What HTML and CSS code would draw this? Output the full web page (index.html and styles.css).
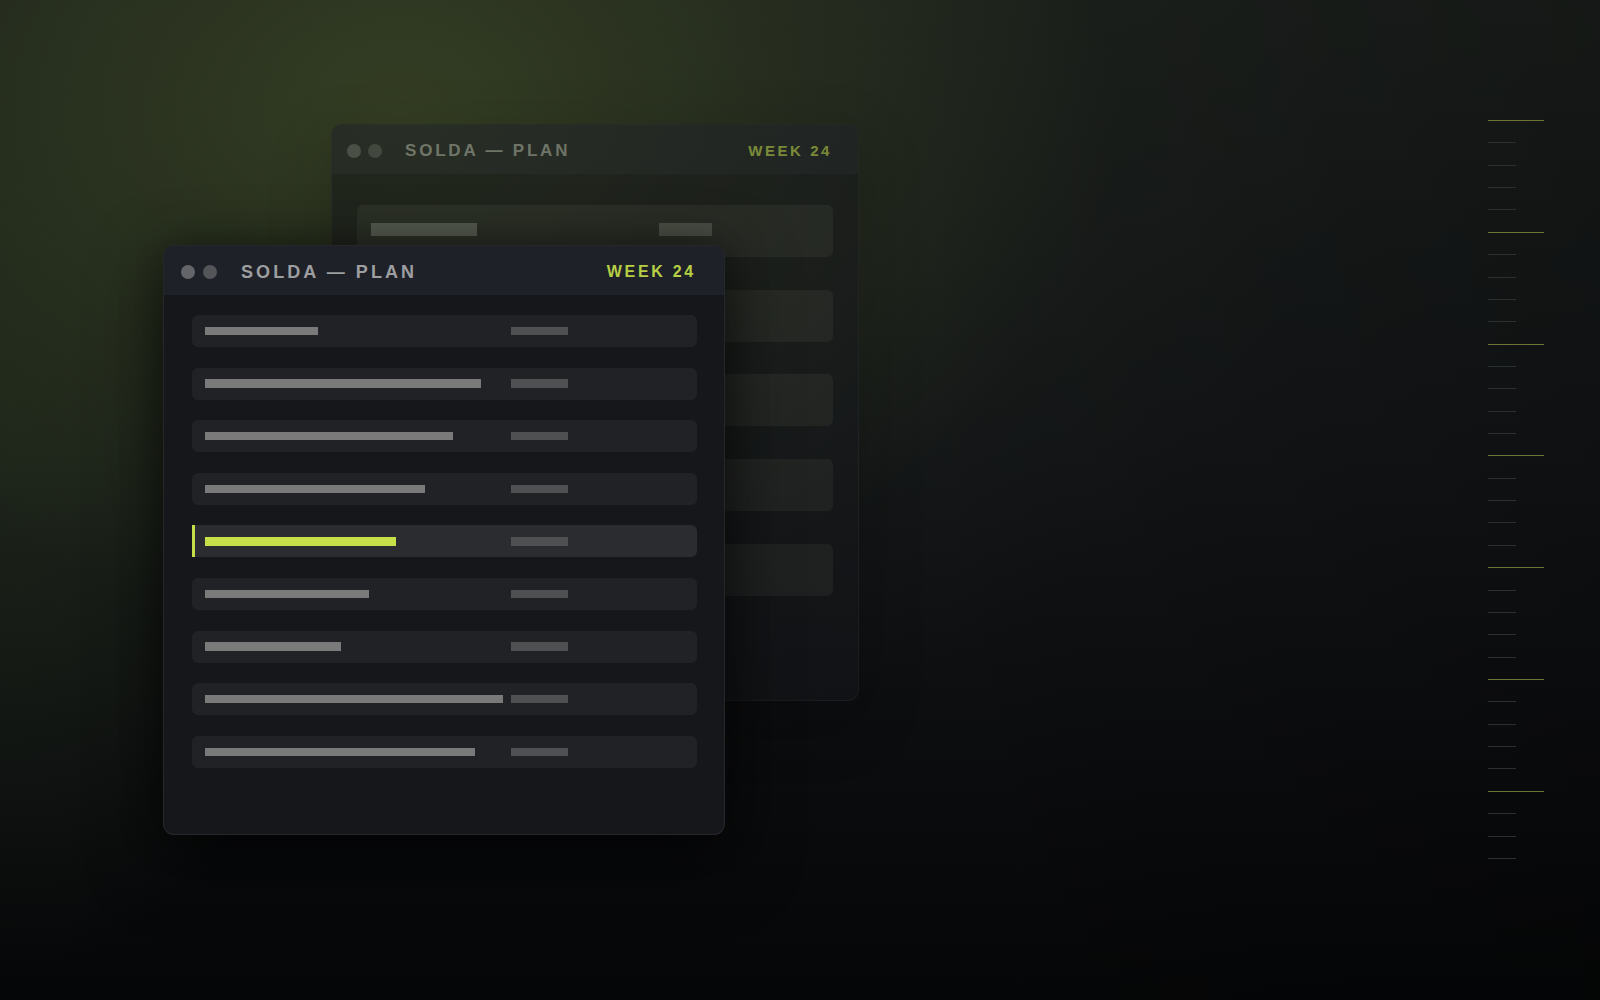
FILE: index.html
```html
<!DOCTYPE html>
<html lang="en">
<head>
<meta charset="utf-8">
<title>Solda — Plan</title>
<link rel="stylesheet" href="styles.css">
</head>
<body>
<div class="stage">
  <section class="window window--back">
    <header class="titlebar">
      <span class="dots"><i class="dot dot--a"></i><i class="dot dot--b"></i></span>
      <span class="title">SOLDA — PLAN</span>
      <span class="week">WEEK 24</span>
    </header>
    <div class="rows">
      <div class="row"><span class="cell"><b class="bar" style="width:106px"></b></span><b class="bar bar--meta"></b></div>
      <div class="row"><span class="cell"><b class="bar" style="width:240px"></b></span><b class="bar bar--meta"></b></div>
      <div class="row"><span class="cell"><b class="bar" style="width:200px"></b></span><b class="bar bar--meta"></b></div>
      <div class="row"><span class="cell"><b class="bar" style="width:180px"></b></span><b class="bar bar--meta"></b></div>
      <div class="row"><span class="cell"><b class="bar" style="width:150px"></b></span><b class="bar bar--meta"></b></div>
    </div>
  </section>

  <section class="window window--front">
    <header class="titlebar">
      <span class="dots"><i class="dot dot--a"></i><i class="dot dot--b"></i></span>
      <span class="title">SOLDA — PLAN</span>
      <span class="week">WEEK 24</span>
    </header>
    <div class="rows">
      <div class="row"><span class="cell"><b class="bar" style="width:113px"></b></span><b class="bar bar--meta"></b></div>
      <div class="row"><span class="cell"><b class="bar" style="width:276px"></b></span><b class="bar bar--meta"></b></div>
      <div class="row"><span class="cell"><b class="bar" style="width:248px"></b></span><b class="bar bar--meta"></b></div>
      <div class="row"><span class="cell"><b class="bar" style="width:220px"></b></span><b class="bar bar--meta"></b></div>
      <div class="row row--active"><span class="cell"><b class="bar bar--lime" style="width:191px"></b></span><b class="bar bar--meta"></b></div>
      <div class="row"><span class="cell"><b class="bar" style="width:164px"></b></span><b class="bar bar--meta"></b></div>
      <div class="row"><span class="cell"><b class="bar" style="width:136px"></b></span><b class="bar bar--meta"></b></div>
      <div class="row"><span class="cell"><b class="bar" style="width:298px"></b></span><b class="bar bar--meta"></b></div>
      <div class="row"><span class="cell"><b class="bar" style="width:270px"></b></span><b class="bar bar--meta"></b></div>
    </div>
  </section>

  <div class="ruler">
    <i class="tick tick--long"></i><i class="tick"></i><i class="tick"></i><i class="tick"></i><i class="tick"></i>
    <i class="tick tick--long"></i><i class="tick"></i><i class="tick"></i><i class="tick"></i><i class="tick"></i>
    <i class="tick tick--long"></i><i class="tick"></i><i class="tick"></i><i class="tick"></i><i class="tick"></i>
    <i class="tick tick--long"></i><i class="tick"></i><i class="tick"></i><i class="tick"></i><i class="tick"></i>
    <i class="tick tick--long"></i><i class="tick"></i><i class="tick"></i><i class="tick"></i><i class="tick"></i>
    <i class="tick tick--long"></i><i class="tick"></i><i class="tick"></i><i class="tick"></i><i class="tick"></i>
    <i class="tick tick--long"></i><i class="tick"></i><i class="tick"></i><i class="tick"></i>
  </div>
</div>
</body>
</html>
```

FILE: styles.css
```css
* { box-sizing: border-box; }

html, body {
  margin: 0;
  padding: 0;
  background: #0a0b0d;
}

.stage {
  position: relative;
  width: 1600px;
  height: 1000px;
  overflow: hidden;
  font-family: "Liberation Sans", Arial, sans-serif;
  background:
    radial-gradient(ellipse 1100px 800px at 400px 110px, rgba(62, 74, 38, 0.72) 0%, rgba(50, 60, 34, 0.5) 35%, rgba(30, 36, 26, 0.16) 65%, rgba(20, 24, 20, 0) 85%),
    radial-gradient(ellipse 420px 650px at 0px 420px, rgba(36, 48, 28, 0.55) 0%, rgba(30, 38, 26, 0) 85%),
    linear-gradient(90deg, rgba(0, 0, 0, 0) 0%, rgba(0, 0, 0, 0) 55%, rgba(0, 0, 0, 0.22) 100%),
    linear-gradient(180deg, #1b1f1c 0%, #131517 45%, #090a0c 85%, #050607 100%);
}

/* ---------- windows ---------- */
.window {
  position: absolute;
  border-radius: 11px;
  border: 1px solid rgba(255, 255, 255, 0.07);
  background: #16171b;
  overflow: hidden;
}

.window--front {
  left: 163px;
  top: 245px;
  width: 562px;
  height: 590px;
  box-shadow: 0 24px 70px rgba(0, 0, 0, 0.55), 0 0 40px rgba(0, 0, 0, 0.35);
}

.window--back {
  left: 331px;
  top: 124px;
  width: 528px;
  height: 577px;
  opacity: 0.52;
  box-shadow: 0 20px 60px rgba(0, 0, 0, 0.3);
}

.titlebar {
  display: flex;
  align-items: center;
  height: 49px;
  padding: 3px 27px 0 17px;
  background: #1f2129;
}

.window--back .titlebar {
  height: 49px;
  padding: 2px 27px 0 15px;
}

.dots {
  display: flex;
  gap: 8px;
}

.window--back .dots { gap: 7px; }

.dot {
  display: block;
  width: 14px;
  height: 14px;
  border-radius: 50%;
}

.dot--a { background: #636569; }
.dot--b { background: #535559; }

.title {
  margin-left: 24px;
  font-size: 18px;
  font-weight: 700;
  letter-spacing: 0.17em;
  color: #9d9ea0;
}

.window--back .title {
  margin-left: 23px;
  font-size: 17px;
  letter-spacing: 0.165em;
  color: #a9aca6;
}

.week {
  margin-left: auto;
  margin-right: 1px;
  font-size: 16px;
  font-weight: 700;
  letter-spacing: 0.17em;
  color: #b7cf45;
}

.window--back .week {
  margin-right: -1px;
  font-size: 15px;
  color: #c8e052;
}

/* ---------- rows ---------- */
.rows {
  display: flex;
  flex-direction: column;
  gap: 20.6px;
  padding: 20px 27px 0 28px;
}

.window--back .rows {
  gap: 32.7px;
  padding: 31px 25px 0 25px;
}

.row {
  display: flex;
  align-items: center;
  height: 32px;
  padding-left: 13px;
  border-radius: 6px;
  background: #212225;
}

.window--back .row {
  height: 52px;
  padding-left: 14px;
  padding-bottom: 4px;
  background: #2b2c2c;
}

.row--active {
  background: #2a2c2f;
  border-left: 3.5px solid #c6df48;
  border-radius: 0 6px 6px 0;
  padding-left: 9.5px;
}

.cell {
  display: flex;
  flex: none;
  width: 306px;
}

.window--back .cell { width: 288px; }

.bar {
  display: block;
  height: 8.5px;
  background: #7a7a7b;
}

.window--back .bar {
  height: 13px;
  background: #7b7d78;
}

.bar--lime { background: #c7e04a; }

.bar--meta {
  flex: none;
  width: 57px;
  background: #4f5052;
}

.window--back .bar--meta {
  width: 53px;
  background: #6a6c68;
}

/* ---------- ruler ---------- */
.ruler {
  position: absolute;
  left: 1488px;
  top: 120px;
  display: flex;
  flex-direction: column;
  gap: 21.36px;
}

.tick {
  display: block;
  width: 28px;
  height: 1px;
  background: #2c302d;
}

.tick--long {
  width: 56px;
  background: #6e7434;
}
```
